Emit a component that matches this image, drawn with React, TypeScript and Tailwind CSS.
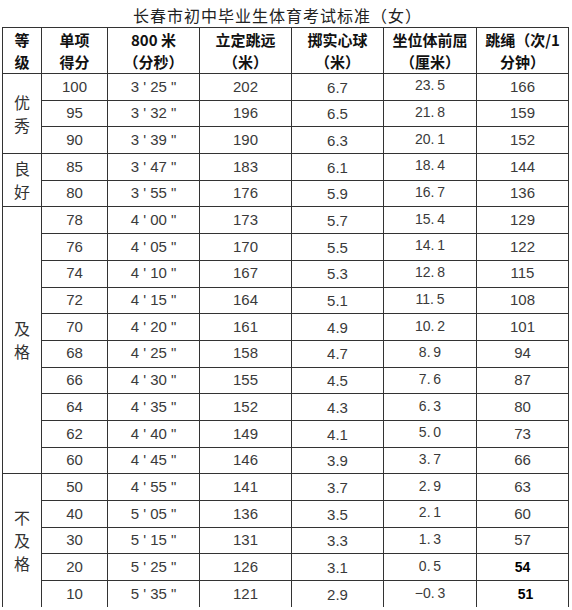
import React from "react";

type Row = [string, string, string, string, string, string];

const rows: Row[] = [
  ["100", "3 ' 25 \"", "202", "6.7", "23.\u20095", "166"],
  ["95", "3 ' 32 \"", "196", "6.5", "21.\u20098", "159"],
  ["90", "3 ' 39 \"", "190", "6.3", "20.\u20091", "152"],
  ["85", "3 ' 47 \"", "183", "6.1", "18.\u20094", "144"],
  ["80", "3 ' 55 \"", "176", "5.9", "16.\u20097", "136"],
  ["78", "4 ' 00 \"", "173", "5.7", "15.\u20094", "129"],
  ["76", "4 ' 05 \"", "170", "5.5", "14.\u20091", "122"],
  ["74", "4 ' 10 \"", "167", "5.3", "12.\u20098", "115"],
  ["72", "4 ' 15 \"", "164", "5.1", "11.\u20095", "108"],
  ["70", "4 ' 20 \"", "161", "4.9", "10.\u20092", "101"],
  ["68", "4 ' 25 \"", "158", "4.7", "8.\u20099", "94"],
  ["66", "4 ' 30 \"", "155", "4.5", "7.\u20096", "87"],
  ["64", "4 ' 35 \"", "152", "4.3", "6.\u20093", "80"],
  ["62", "4 ' 40 \"", "149", "4.1", "5.\u20090", "73"],
  ["60", "4 ' 45 \"", "146", "3.9", "3.\u20097", "66"],
  ["50", "4 ' 55 \"", "141", "3.7", "2.\u20099", "63"],
  ["40", "5 ' 05 \"", "136", "3.5", "2.\u20091", "60"],
  ["30", "5 ' 15 \"", "131", "3.3", "1.\u20093", "57"],
  ["20", "5 ' 25 \"", "126", "3.1", "0.\u20095", "54"],
  ["10", "5 ' 35 \"", "121", "2.9", "−0.\u20093", "51"],
];

const groups: Record<number, { span: number; chars: string[] }> = {
  0: { span: 3, chars: ["优", "秀"] },
  3: { span: 2, chars: ["良", "好"] },
  5: { span: 10, chars: ["及", "格"] },
  15: { span: 5, chars: ["不", "及", "格"] },
};

const cjk = { fontFamily: '"Noto Sans CJK SC", "Noto Sans", sans-serif' };
const num = { fontFamily: '"Liberation Sans", Arial, sans-serif' };

export default function App() {
  const headers: [string, string][] = [
    ["等", "级"],
    ["单项", "得分"],
    ["800 米", "（分秒）"],
    ["立定跳远", "（米）"],
    ["掷实心球", "（米）"],
    ["坐位体前屈", "（厘米）"],
    ["跳绳（次/1", "分钟）"],
  ];
  return (
    <div className="w-[572px] h-[610px] bg-white overflow-hidden">
      <div
        className="h-[27px] pt-[4px] pl-[133px] text-[16px] leading-[22px] tracking-[1px] text-[#222]"
        style={cjk}
      >
        长春市初中毕业生体育考试标准（女）
      </div>
      <table className="ml-[2px] w-[566px] table-fixed border-collapse">
        <colgroup>
          <col className="w-[39px]" />
          <col className="w-[66px]" />
          <col className="w-[92px]" />
          <col className="w-[92px]" />
          <col className="w-[92px]" />
          <col className="w-[93px]" />
          <col className="w-[92px]" />
        </colgroup>
        <thead>
          <tr className="h-[46px]">
            {headers.map((h, i) => (
              <th
                key={i}
                className="border border-[#333] p-0 text-center align-middle text-[15px] leading-[22px] font-bold text-[#111] whitespace-nowrap"
                style={cjk}
              >
                <div>{h[0]}</div>
                <div>{h[1]}</div>
              </th>
            ))}
          </tr>
        </thead>
        <tbody>
          {rows.map((r, i) => {
            const last = i === rows.length - 1;
            const bcls = last ? "border border-b-0 border-[#333]" : "border border-[#333]";
            const g = groups[i];
            return (
              <tr key={i} className="h-[26.7px]">
                {g && (
                  <td
                    rowSpan={g.span}
                    className={`${i === 15 ? "border border-b-0 border-[#333]" : "border border-[#333]"} p-0 text-center align-middle text-[16px] leading-[23px] text-[#333]`}
                    style={cjk}
                  >
                    {g.chars.map((c) => (
                      <div key={c}>{c}</div>
                    ))}
                  </td>
                )}
                <td className={`${bcls} p-0 text-center align-middle text-[15px] text-[#3a3a3a]`} style={num}>
                  {r[0]}
                </td>
                <td className={`${bcls} p-0 text-center align-middle text-[15px] text-[#3a3a3a] whitespace-pre`} style={num}>
                  {r[1]}
                </td>
                <td className={`${bcls} p-0 text-center align-middle text-[15px] text-[#3a3a3a]`} style={num}>
                  {r[2]}
                </td>
                <td className={`${bcls} p-0 pt-[2px] text-center align-middle text-[15px] text-[#3a3a3a]`} style={num}>
                  {r[3]}
                </td>
                <td className={`${bcls} p-0 pb-[2px] text-center align-middle text-[14px] text-[#3a3a3a] whitespace-pre`} style={num}>
                  {r[4]}
                </td>
                {i >= 18 ? (
                  <td
                    className={`${bcls} p-0 ${i === 19 ? "pl-[6px]" : ""} text-center align-middle text-[14px] font-bold text-black`}
                    style={num}
                  >
                    {r[5]}
                  </td>
                ) : (
                  <td className={`${bcls} p-0 text-center align-middle text-[15px] text-[#3a3a3a]`} style={num}>
                    {r[5]}
                  </td>
                )}
              </tr>
            );
          })}
        </tbody>
      </table>
    </div>
  );
}
